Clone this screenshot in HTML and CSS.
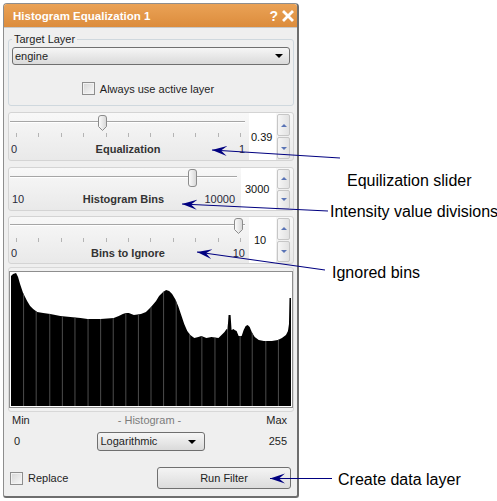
FILE: index.html
```html
<!DOCTYPE html>
<html>
<head>
<meta charset="utf-8">
<link rel="stylesheet" href="styles.css">
</head>
<body>
<div class="page">
  <div class="window">
    <div class="titlebar">
      <span class="title">Histogram Equalization 1</span>
      <span class="tb-icons">
        <span class="help">?</span>
        <svg class="close" width="12" height="12" viewBox="0 0 12 12"><path d="M2 2 L10 10 M10 2 L2 10" stroke="#fff" stroke-width="2.8" stroke-linecap="square"/></svg>
      </span>
    </div>
    <div class="body">
      <fieldset class="group">
        <legend>Target Layer</legend>
        <div class="combo"><span>engine</span><span class="caret"></span></div>
        <div class="check-row"><span class="checkbox"></span><span>Always use active layer</span></div>
      </fieldset>

      <div class="slider-panel p1">
        <div class="slider-area">
          <div class="track"></div>
          <svg class="handle" style="left:88px" width="11" height="17" viewBox="0 0 11 17"><defs><linearGradient id="hg1" x1="0" y1="0" x2="1" y2="0"><stop offset="0" stop-color="#fdfdfd"/><stop offset="1" stop-color="#d6d6d6"/></linearGradient></defs><path d="M1.5 3 Q1.5 0.5 4 0.5 H7 Q9.5 0.5 9.5 3 V11.5 L5.5 15.5 L1.5 11.5 Z" fill="url(#hg1)" stroke="#8c8c8c"/></svg>
          <div class="ticks"><span></span><span></span><span></span><span></span><span></span><span></span><span></span><span></span><span></span><span></span><span></span></div>
          <div class="labels"><span class="lo">0</span><b>Equalization</b><span class="hi">1</span></div>
        </div>
        <div class="value">0.39</div>
        <div class="spin"><span class="up"></span><span class="down"></span></div>
      </div>

      <div class="slider-panel p2">
        <div class="slider-area">
          <div class="track"></div>
          <svg class="handle" style="left:178px" width="11" height="19" viewBox="0 0 11 19"><defs><linearGradient id="hg2" x1="0" y1="0" x2="1" y2="0"><stop offset="0" stop-color="#fdfdfd"/><stop offset="1" stop-color="#d6d6d6"/></linearGradient></defs><rect x="1.5" y="0.5" width="8" height="17" rx="2.5" fill="url(#hg2)" stroke="#8c8c8c"/></svg>
          <div class="labels"><span class="lo">10</span><b>Histogram Bins</b><span class="hi">10000</span></div>
        </div>
        <div class="value">3000</div>
        <div class="spin"><span class="up"></span><span class="down"></span></div>
      </div>

      <div class="slider-panel p3">
        <div class="slider-area">
          <div class="track"></div>
          <svg class="handle" style="left:224px" width="11" height="17" viewBox="0 0 11 17"><defs><linearGradient id="hg3" x1="0" y1="0" x2="1" y2="0"><stop offset="0" stop-color="#fdfdfd"/><stop offset="1" stop-color="#d6d6d6"/></linearGradient></defs><path d="M1.5 3 Q1.5 0.5 4 0.5 H7 Q9.5 0.5 9.5 3 V11.5 L5.5 15.5 L1.5 11.5 Z" fill="url(#hg3)" stroke="#8c8c8c"/></svg>
          <div class="ticks"><span></span><span></span><span></span><span></span><span></span><span></span><span></span><span></span><span></span><span></span><span></span></div>
          <div class="labels"><span class="lo">0</span><b>Bins to Ignore</b><span class="hi">10</span></div>
        </div>
        <div class="value">10</div>
        <div class="spin"><span class="up"></span><span class="down"></span></div>
      </div>

      <div class="hist-panel">
        <div class="hist-frame">
          <svg class="hist" viewBox="11 272 278 133" preserveAspectRatio="none">
            <defs>
              <clipPath id="hc"><path d="M11,405 L11,275 L13,273 L16,272 L18,276 L20,283 L23,292 L27,300 L30,305 L33,308 L37,311 L43,312 L50,313 L60,315 L70,316 L80,317 L87,318 L100,318 L113,317 L118,315 L122,313 L125,312 L128,312 L133,314 L140,313 L145,311 L150,306 L155,300 L158,295 L162,291 L165,289 L168,290 L171,293 L174,298 L177,305 L180,314 L183,323 L186,330 L189,334 L193,337 L197,336 L200,335 L205,337 L210,336 L217,337 L220,334 L223,331 L225,328 L226,329 L227,314 L229,314 L230,329 L232,328 L233,329 L235,330 L237,335 L240,335 L242,329 L244,325 L246,324 L248,326 L250,331 L253,336 L257,339 L262,340 L270,340 L276,339 L280,337 L284,334 L286,330 L287,323 L287.5,297 L289,297 L289,405 Z"/></clipPath>
            </defs>
            <rect x="11" y="272" width="278" height="133" fill="#fff"/>
            <g clip-path="url(#hc)">
              <rect x="11" y="272" width="278" height="133" fill="#000"/>
              <g stroke="#4d4d4d" stroke-width="1">
                <path d="M23.5 272V405M36 272V405M49.5 272V405M62 272V405M74.5 272V405M87.5 272V405M100 272V405M112.5 272V405M125 272V405M137.5 272V405M150 272V405M162.5 272V405M175 272V405M188.5 272V405M200.5 272V405M213.5 272V405M226 272V405M238.5 272V405M250.5 272V405M264 272V405M276.5 272V405"/>
              </g>
            </g>
          </svg>
        </div>
      </div>

      <div class="hist-legend"><span>Min</span><span class="hist-title">- Histogram -</span><span class="right">Max</span></div>
      <div class="hist-row"><span class="min-val">0</span><div class="combo small"><span>Logarithmic</span><span class="caret"></span></div><span class="right max-val">255</span></div>

      <div class="actions">
        <div class="check-row left"><span class="checkbox"></span><span>Replace</span></div>
        <div class="button">Run Filter</div>
      </div>
    </div>
  </div>

  <div class="notes">
    <div class="note n1">Equilization slider</div>
    <div class="note n2">Intensity value divisions</div>
    <div class="note n3">Ignored bins</div>
    <div class="note n4">Create data layer</div>
  </div>

  <svg class="arrows" width="497" height="501" viewBox="0 0 497 501">
    <defs>
      <marker id="ah" markerUnits="userSpaceOnUse" markerWidth="16" markerHeight="12" viewBox="-15 -6 16 12" refX="0" refY="0" orient="auto">
        <path d="M0,0 L-15,-5 L-9,0 L-15,5 Z" fill="#000080"/>
      </marker>
    </defs>
    <g stroke="#000080" stroke-width="1.2" fill="none">
      <line x1="340" y1="158" x2="212" y2="150" marker-end="url(#ah)"/>
      <line x1="328" y1="211" x2="182" y2="204" marker-end="url(#ah)"/>
      <line x1="325" y1="270" x2="197" y2="252" marker-end="url(#ah)"/>
      <line x1="332" y1="478.5" x2="270" y2="478.5" marker-end="url(#ah)"/>
    </g>
  </svg>
</div>
</body>
</html>
```

FILE: styles.css
```css
* { box-sizing: border-box; }

body {
  margin: 0;
  background: #fff;
  font-family: "Liberation Sans", Arial, sans-serif;
  font-size: 11px;
  color: #1e1e1e;
}

.page {
  position: relative;
  display: flex;
  align-items: flex-start;
  width: 497px;
  height: 501px;
  padding: 3px 0 0 3px;
  overflow: hidden;
}

.window {
  flex: none;
  width: 296px;
  height: 495px;
  border: 1px solid #8e8e8e;
  border-right: 2px solid #6e6e6e;
  border-bottom: 2px solid #6e6e6e;
  border-radius: 4px 4px 3px 3px;
  background: #efefef;
  display: flex;
  flex-direction: column;
}

.titlebar {
  height: 24px;
  flex: none;
  display: flex;
  align-items: center;
  justify-content: space-between;
  padding: 0 3px 0 9px;
  background: linear-gradient(#eaa256, #dc8c3c);
  border-bottom: 1px solid #c8c8c8;
  border-radius: 3px 3px 0 0;
  color: #fff;
  font-weight: bold;
  font-size: 11.5px;
}

.tb-icons {
  display: flex;
  align-items: center;
  gap: 4px;
}

.help {
  font-size: 14px;
  line-height: 14px;
}

.close { display: block; }

.body {
  display: flex;
  flex-direction: column;
  padding: 5px 3px 0 4px;
}

.group {
  margin: 0;
  padding: 0 3px 10px;
  border: 1px solid #cfd8de;
  border-radius: 3px;
}

.group legend {
  padding: 0 2px;
  line-height: 13px;
  font-size: 11px;
}

.combo {
  display: flex;
  align-items: center;
  justify-content: space-between;
  height: 18px;
  margin-top: 1px;
  padding: 0 6px 0 2px;
  border: 1px solid #6f6f6f;
  border-radius: 3px;
  background: linear-gradient(#f6f6f6, #dadada);
}

.caret {
  width: 0;
  height: 0;
  border-left: 4px solid transparent;
  border-right: 4px solid transparent;
  border-top: 4px solid #000;
}

.check-row {
  display: flex;
  align-items: center;
  justify-content: center;
  gap: 5px;
  height: 13px;
  margin-top: 17px;
  padding-right: 6px;
}

.checkbox {
  width: 13px;
  height: 13px;
  border: 1px solid #8e8e8e;
  background: linear-gradient(135deg, #d6d6d6, #f8f8f8);
  box-shadow: inset 0 0 0 1px #f2f2f2;
}

/* slider panels */
.slider-panel {
  display: flex;
  margin-top: 6px;
  padding-right: 2px;
  border: 1px solid #d4d4d4;
  border-radius: 3px;
  background: linear-gradient(#f8f8f8, #e9e9e9);
}

.slider-panel.p1 { height: 49px; }
.slider-panel.p2 { height: 44px; }
.slider-panel.p3 { height: 48px; margin-top: 5px; }

.slider-area {
  position: relative;
  flex: 1;
}

.track {
  height: 2px;
  margin: 8px 4px 0 1px;
  border-top: 1px solid #a6a6a6;
  border-bottom: 1px solid #fff;
}

.p3 .track { margin-top: 7px; }

.handle {
  position: absolute;
  top: 1px;
}

.p1 .handle { top: 2px; }

.ticks {
  display: flex;
  justify-content: space-between;
  height: 4px;
  margin-top: 10px;
  padding: 0 8px 0 7px;
}

.p3 .ticks { margin-top: 12px; }

.ticks span {
  width: 1px;
  height: 4px;
  background: #b4b4b4;
}

.labels {
  display: grid;
  grid-template-columns: 1fr auto 1fr;
  align-items: center;
  line-height: 13px;
  margin-top: 6px;
  padding: 0 4px 0 2px;
  color: #2a2a3a;
}

.p2 .labels { margin-top: 15px; padding-right: 6px; padding-left: 3px; }
.p3 .labels { margin-top: 5px; }

.labels b { color: #333; }
.labels .hi { text-align: right; }

.value {
  width: 27px;
  display: flex;
  align-items: center;
  padding-left: 2px;
  background: #fff;
  color: #111;
}

.p2 .value { width: 35px; padding-left: 4px; }
.p3 .value { padding-left: 5px; }

.spin {
  width: 15px;
  display: flex;
  flex-direction: column;
  gap: 1px;
  padding: 1px;
}

.spin span {
  flex: 1;
  display: flex;
  align-items: center;
  justify-content: center;
  border: 1px solid #c6c6c6;
  border-radius: 2px;
  background: linear-gradient(90deg, #f6f6f6, #e2e2e2);
}

.spin span::after {
  content: "";
  width: 0;
  height: 0;
  border-left: 3px solid transparent;
  border-right: 3px solid transparent;
}

.spin .up::after { border-bottom: 3px solid #5a74b6; }
.spin .down::after { border-top: 3px solid #5a74b6; }

/* histogram */
.hist-panel {
  margin-top: 3px;
  padding: 3px 0;
  border: 1px solid #d8d8d8;
  border-radius: 3px;
  background: #f1f1f1;
}

.hist-frame {
  padding: 1px;
  border: 1px solid #8e8e8e;
  background: #fff;
}

.hist {
  display: block;
  width: 100%;
  height: 133px;
}

.hist-legend,
.hist-row {
  display: grid;
  grid-template-columns: 1fr auto 1fr;
  align-items: center;
  line-height: 13px;
}

.hist-legend {
  margin-top: 2px;
  padding: 0 7px 0 4px;
}

.hist-title { color: #7c7c7c; }
.right { text-align: right; }

.hist-row {
  margin-top: 5px;
  padding: 0 7px 0 6px;
}

.combo.small {
  width: 108px;
  height: 19px;
  margin-top: 0;
  padding: 0 8px 0 3px;
}

.actions {
  display: flex;
  align-items: center;
  justify-content: space-between;
  margin-top: 16px;
  padding: 0 3px 0 2px;
}

.check-row.left {
  margin-top: 0;
  padding: 0;
  justify-content: flex-start;
  height: 14px;
}

.button {
  width: 134px;
  height: 22px;
  display: flex;
  align-items: center;
  justify-content: center;
  border: 1px solid #707070;
  border-radius: 3px;
  background: linear-gradient(#f4f4f4, #dcdcdc);
  color: #222;
}

/* annotations */
.notes {
  display: flex;
  flex-direction: column;
  align-items: flex-start;
  font-size: 16px;
  line-height: 18px;
  color: #000;
  white-space: nowrap;
}

.note.n1 { margin: 169px 0 0 48px; }
.note.n2 { margin: 13px 0 0 31px; }
.note.n3 { margin: 43px 0 0 33px; }
.note.n4 { margin: 189px 0 0 39px; }

.arrows {
  position: absolute;
  top: 0;
  left: 0;
  pointer-events: none;
}
```
